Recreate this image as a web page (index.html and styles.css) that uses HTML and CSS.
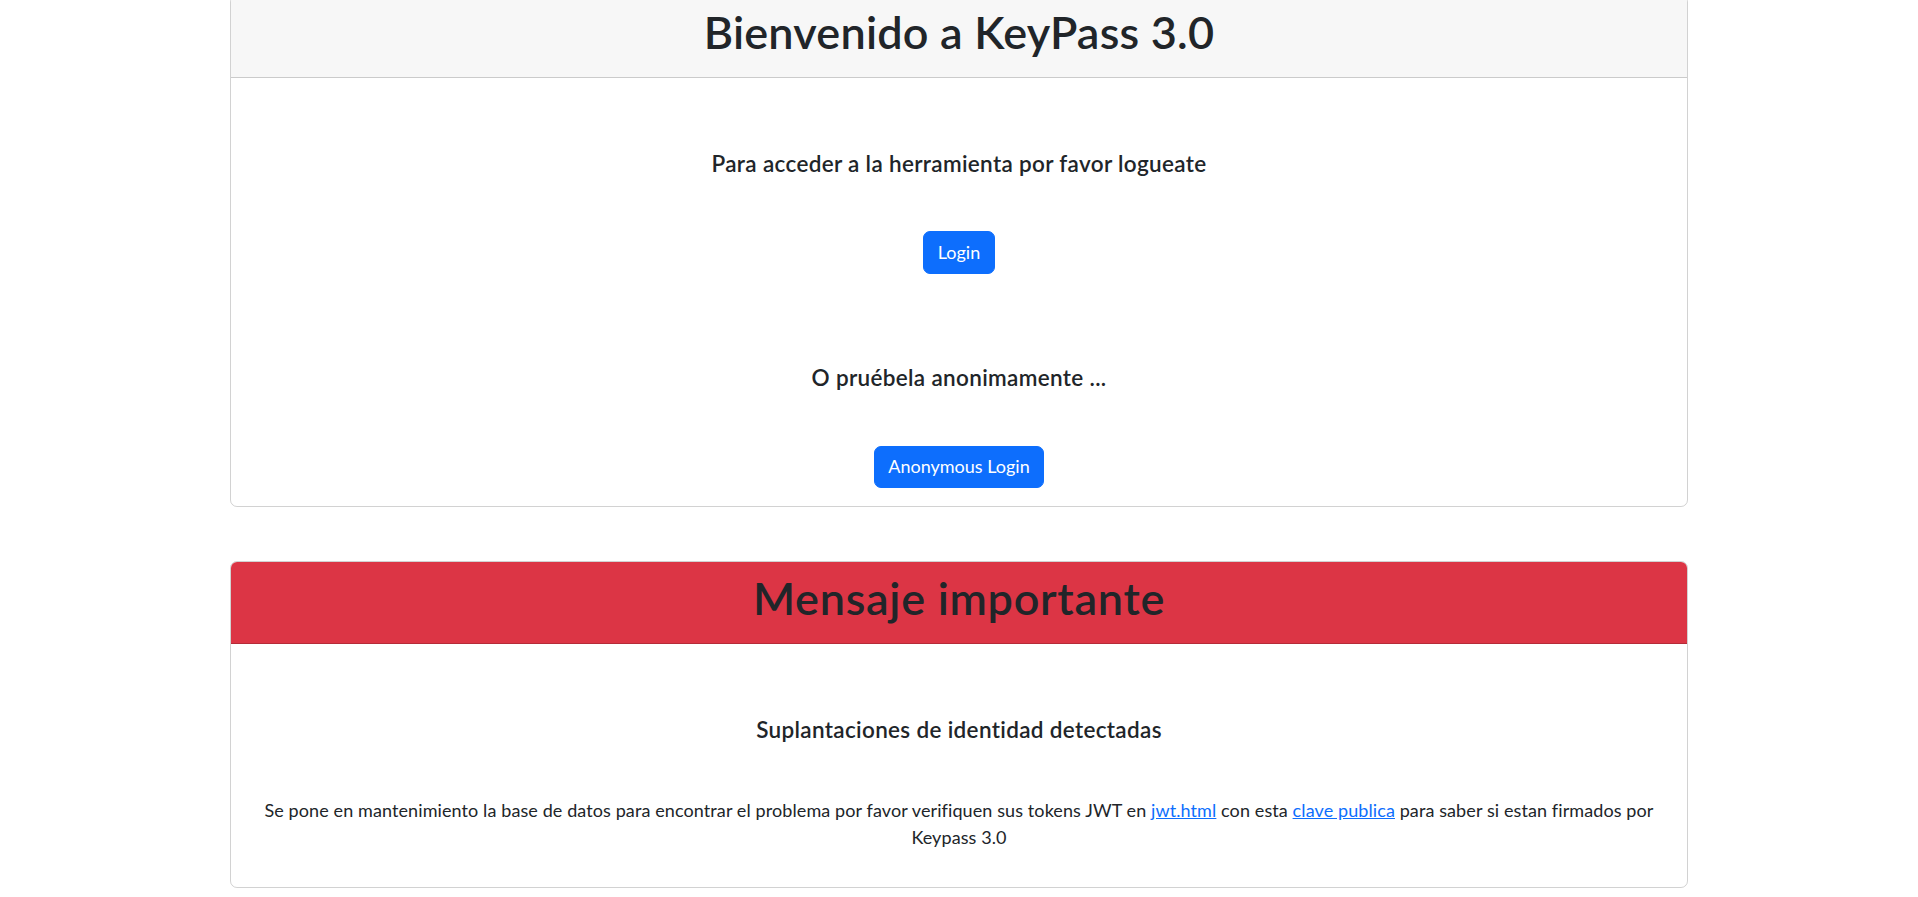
FILE: index.html
```html
<!DOCTYPE html>
<html lang="es">
<head>
<meta charset="utf-8">
<title>KeyPass 3.0</title>
<link rel="stylesheet" href="styles.css">
</head>
<body>
<main class="page">
  <section class="card card-first">
    <header class="card-header">
      <h1 class="card-title">Bienvenido a KeyPass 3.0</h1>
    </header>
    <div class="card-body">
      <h5 class="lead-title">Para acceder a la herramienta por favor logueate</h5>
      <button class="btn" type="button">Login</button>
      <h5 class="lead-title second">O pruébela anonimamente ...</h5>
      <button class="btn btn-last" type="button">Anonymous Login</button>
    </div>
  </section>

  <section class="card">
    <header class="card-header danger">
      <h1 class="card-title wide">Mensaje importante</h1>
    </header>
    <div class="card-body">
      <h5 class="lead-title">Suplantaciones de identidad detectadas</h5>
      <p class="message">Se pone en mantenimiento la base de datos para encontrar el problema por favor verifiquen sus tokens JWT en <a href="#">jwt.html</a> con esta <a href="#">clave publica</a> para saber si estan firmados por Keypass 3.0</p>
    </div>
  </section>
</main>
</body>
</html>
```

FILE: styles.css
```css
* { box-sizing: border-box; }
html, body { margin: 0; padding: 0; background: #fff; }
body {
  font-family: Lato, "Liberation Sans", sans-serif;
  font-size: 18px;
  line-height: 1.5;
  color: #212529;
}
.page {
  width: 1458px;
  margin: 0 auto;
  padding-bottom: 40px;
  display: flex;
  flex-direction: column;
  gap: 54px;
}
.card {
  border: 1px solid rgba(0,0,0,0.175);
  border-radius: 7px;
  overflow: hidden;
  text-align: center;
}
.card-first { margin-top: -5px; }
.card-header {
  background: #f7f7f7;
  border-bottom: 1px solid rgba(0,0,0,0.175);
  padding: 9px 18px;
}
.card-header.danger { background: #dc3545; }
.card-title {
  margin: 0 0 9px;
  font-size: 45px;
  font-weight: 600;
  line-height: 54px;
  letter-spacing: 0.2px;
}
.card-title.wide { letter-spacing: 0.7px; }
.card-body {
  padding: 18px;
  display: flex;
  flex-direction: column;
  align-items: center;
}
.lead-title {
  margin: 54px 0 9px;
  font-size: 22.5px;
  font-weight: 600;
  line-height: 27px;
  letter-spacing: 0.33px;
}
.lead-title.second { margin-top: 90px; }
.btn {
  margin-top: 45px;
  font-family: inherit;
  font-size: 18px;
  line-height: 27px;
  color: #fff;
  background: #0d6efd;
  border: 1px solid #0d6efd;
  border-radius: 7px;
  padding: 6.75px 13.5px;
}
.btn-last { margin-top: 46px; }
.message {
  margin: 45px 0 18px;
  font-size: 18px;
  line-height: 27px;
  letter-spacing: 0.1px;
}
.message a { color: #0d6efd; text-decoration: underline; }
```
